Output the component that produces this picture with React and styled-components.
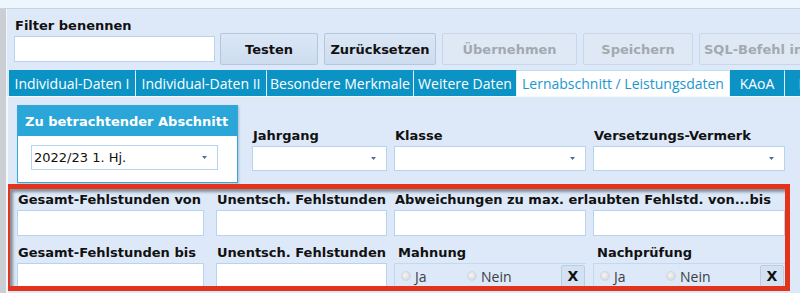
import React from 'react';
import { styled, createGlobalStyle } from 'styled-components';

const tabs = [
    { label: 'Individual-Daten I', width: 127 },
    { label: 'Individual-Daten II', width: 131 },
    { label: 'Besondere Merkmale', width: 147 },
    { label: 'Weitere Daten', width: 103 },
    { label: 'Lernabschnitt / Leistungsdaten', width: 213, active: true },
    { label: 'KAoA', width: 55 },
    { label: 'Laufbahn', width: 90 },
];

const buttons = [
    { label: 'Testen', width: 98 },
    { label: 'Zurücksetzen', width: 112 },
    { label: 'Übernehmen', width: 135, disabled: true },
    { label: 'Speichern', width: 110, disabled: true },
    { label: 'SQL-Befehl in Zwischenablage', width: 200, disabled: true, start: true },
];

function Caret() {
    return (
        <svg width="5" height="3" viewBox="0 0 5 3">
            <path d="M0 0 L5 0 L2.5 3 Z" fill="#4a6e9a" />
        </svg>
    );
}

function App() {
    return (
        <>
            <GlobalStyle />
            <Page>
                <TopStrip />
                <Body>
                    <Splitter />
                    <Main>
                        <Toolbar>
                            <FilterField>
                                <Label>Filter benennen</Label>
                                <TextBox width={201} />
                            </FilterField>
                            {buttons.map((b) => (
                                <Button key={b.label} width={b.width} disabled={b.disabled} start={b.start}>
                                    {b.label}
                                </Button>
                            ))}
                        </Toolbar>

                        <TabBar>
                            {tabs.map((t) => (
                                <Tab key={t.label} width={t.width} active={t.active}>
                                    {t.label}
                                </Tab>
                            ))}
                        </TabBar>

                        <Content>
                            <SelectRow>
                                <SectionBox>
                                    <SectionHeader>Zu betrachtender Abschnitt</SectionHeader>
                                    <SectionBody>
                                        <Select width={187}>
                                            <span>2022/23 1. Hj.</span>
                                            <Caret />
                                        </Select>
                                    </SectionBody>
                                </SectionBox>
                                <Field>
                                    <Label>Jahrgang</Label>
                                    <Select width={135}><span /><Caret /></Select>
                                </Field>
                                <Field>
                                    <Label>Klasse</Label>
                                    <Select width={192}><span /><Caret /></Select>
                                </Field>
                                <Field>
                                    <Label>Versetzungs-Vermerk</Label>
                                    <Select width={192}><span /><Caret /></Select>
                                </Field>
                            </SelectRow>

                            <Highlight>
                                <Inner>
                                    <FieldGrid>
                                        <Field>
                                            <Label>Gesamt-Fehlstunden von</Label>
                                            <TextBox width={187} />
                                        </Field>
                                        <Field>
                                            <Label>Unentsch. Fehlstunden</Label>
                                            <TextBox width={171} />
                                        </Field>
                                        <WideField>
                                            <Label>Abweichungen zu max. erlaubten Fehlstd. von...bis</Label>
                                            <Pair>
                                                <TextBox width={192} />
                                                <TextBox width={192} />
                                            </Pair>
                                        </WideField>

                                        <Field>
                                            <Label>Gesamt-Fehlstunden bis</Label>
                                            <TextBox width={187} />
                                        </Field>
                                        <Field>
                                            <Label>Unentsch. Fehlstunden</Label>
                                            <TextBox width={171} />
                                        </Field>
                                        {['Mahnung', 'Nachprüfung'].map((name) => (
                                            <Field key={name}>
                                                <Label indent>{name}</Label>
                                                <RadioGroup>
                                                    <RadioItem width={66}><Radio />Ja</RadioItem>
                                                    <RadioItem width={80}><Radio />Nein</RadioItem>
                                                    <ClearButton>X</ClearButton>
                                                </RadioGroup>
                                            </Field>
                                        ))}
                                    </FieldGrid>
                                </Inner>
                            </Highlight>
                        </Content>
                    </Main>
                </Body>
            </Page>
        </>
    );
}

const GlobalStyle = createGlobalStyle`
    html, body {
        margin: 0;
        padding: 0;
        overflow: hidden;
        background: #dde9f8;
    }
    * {
        box-sizing: border-box;
    }
`;

const Page = styled.div`
    width: 800px;
    height: 293px;
    overflow: hidden;
    display: flex;
    flex-direction: column;
    font-family: "DejaVu Sans", sans-serif;
    color: #111;
`;

const TopStrip = styled.div`
    height: 9px;
    flex-shrink: 0;
    background: #edf5fd;
    border-bottom: 1px solid #c3d5ea;
`;

const Body = styled.div`
    flex: 1;
    display: flex;
    min-height: 0;
`;

const Splitter = styled.div`
    width: 7px;
    flex-shrink: 0;
    background: #cbced3;
    border-right: 1px solid #f3f7fc;
`;

const Main = styled.div`
    flex: 1;
    display: flex;
    flex-direction: column;
    min-width: 0;
    background: #dde9f8;
    padding-top: 9px;
`;

const Toolbar = styled.div`
    display: flex;
    flex-shrink: 0;
    align-items: flex-end;
    gap: 6px;
    padding-left: 7px;
    white-space: nowrap;
`;

const FilterField = styled.div`
    display: flex;
    flex-direction: column;
    flex-shrink: 0;
    padding-bottom: 3px;
    margin-right: -1px;
`;

const Label = styled.div`
    font-size: 13px;
    font-weight: bold;
    line-height: 16px;
    margin-bottom: 2px;
    padding-left: ${(p) => (p.indent ? '4px' : '1px')};
    white-space: nowrap;
`;

const TextBox = styled.div`
    width: ${(p) => p.width}px;
    flex-shrink: 0;
    height: 26px;
    background: #fff;
    border: 1px solid #b7d3ee;
`;

const Button = styled.div`
    width: ${(p) => p.width}px;
    flex-shrink: 0;
    height: 32px;
    display: flex;
    align-items: center;
    justify-content: ${(p) => (p.start ? 'flex-start' : 'center')};
    padding-left: ${(p) => (p.start ? '4px' : '0')};
    font-size: 13px;
    font-weight: bold;
    color: ${(p) => (p.disabled ? '#a2a9b0' : '#111')};
    background: ${(p) => (p.disabled ? '#dfe9f6' : 'linear-gradient(#dbe7f5, #cddcef)')};
    border: 1px solid ${(p) => (p.disabled ? '#c8d6e8' : '#b4c7de')};
    border-radius: 2px;
    overflow: hidden;
`;

const TabBar = styled.div`
    display: flex;
    flex-shrink: 0;
    margin-top: 5px;
    padding-left: 2px;
    height: 26px;
    white-space: nowrap;
`;

const Tab = styled.div`
    width: ${(p) => p.width}px;
    flex-shrink: 0;
    display: flex;
    align-items: center;
    justify-content: center;
    font-family: "Open Sans", sans-serif;
    font-size: 14px;
    color: ${(p) => (p.active ? '#1a97cf' : '#fff')};
    background: ${(p) => (p.active ? '#fff' : '#0a93c4')};
    border-right: 1px solid #e4eef9;
    border-top: 1px solid ${(p) => (p.active ? '#bfe0f2' : '#0a93c4')};
    overflow: hidden;
`;

const Content = styled.div`
    flex: 1;
    min-height: 0;
    overflow: hidden;
    display: flex;
    flex-direction: column;
    border-top: 1px solid #f5f9fe;
    border-left: 1px solid #f5f9fe;
    padding-top: 8px;
`;

const SelectRow = styled.div`
    display: flex;
    flex-shrink: 0;
    align-items: flex-end;
    gap: 7px;
    padding-left: 9px;
`;

const SectionBox = styled.div`
    width: 221px;
    flex-shrink: 0;
    margin-right: 7px;
    border: 1px solid #33a8d9;
    background: #fff;
    box-shadow: 1px 1px 2px rgba(70, 110, 150, 0.35);
`;

const SectionHeader = styled.div`
    height: 30px;
    display: flex;
    align-items: center;
    padding-left: 7px;
    background: #2aa6d8;
    color: #fff;
    font-size: 13px;
    font-weight: bold;
`;

const SectionBody = styled.div`
    padding: 9px 0 0 13px;
`;

const Field = styled.div`
    display: flex;
    flex-direction: column;
    min-width: 0;
`;

const Select = styled.div`
    width: ${(p) => p.width}px;
    height: 25px;
    display: flex;
    align-items: center;
    justify-content: space-between;
    padding: 0 10px 0 2px;
    background: #fff;
    border: 1px solid #b7d3ee;
    font-size: 13px;
    margin-bottom: 12px;
`;

const Highlight = styled.div`
    flex-shrink: 0;
    margin-left: -3px;
    margin-top: 1px;
    width: 785px;
    height: 107px;
    border: 5px solid #e3331a;
`;

const Inner = styled.div`
    height: 100%;
    overflow: hidden;
    padding: 3px 0 0 7px;
    box-shadow: inset 3px 3px 3px rgba(60, 70, 80, 0.55);
`;

const FieldGrid = styled.div`
    display: grid;
    grid-template-columns: 192px 171px 192px 192px;
    column-gap: 7px;
    row-gap: 9px;
`;

const WideField = styled(Field)`
    grid-column: span 2;
`;

const Pair = styled.div`
    display: flex;
    gap: 7px;
`;

const RadioGroup = styled.div`
    width: 192px;
    height: 25px;
    display: flex;
    align-items: center;
    border-top: 1px solid #c6d8ec;
    border-left: 1px solid #c6d8ec;
    padding-left: 6px;
    font-family: "Open Sans", sans-serif;
    font-size: 14px;
    color: #3a3f45;
`;

const RadioItem = styled.div`
    width: ${(p) => p.width}px;
    display: flex;
    align-items: center;
    gap: 4px;
`;

const Radio = styled.span`
    width: 10px;
    height: 10px;
    border-radius: 50%;
    background: radial-gradient(circle at 40% 40%, #f6f6f6, #c9ced4);
    border: 1px solid #d2d8df;
`;

const ClearButton = styled.div`
    width: 24px;
    height: 23px;
    margin-left: auto;
    margin-right: 1px;
    display: flex;
    align-items: center;
    justify-content: center;
    font-family: "DejaVu Sans", sans-serif;
    font-size: 14px;
    font-weight: bold;
    color: #111;
    background: #d3e1f2;
    border: 1px solid #bccde2;
    border-radius: 2px;
`;

export default App;
